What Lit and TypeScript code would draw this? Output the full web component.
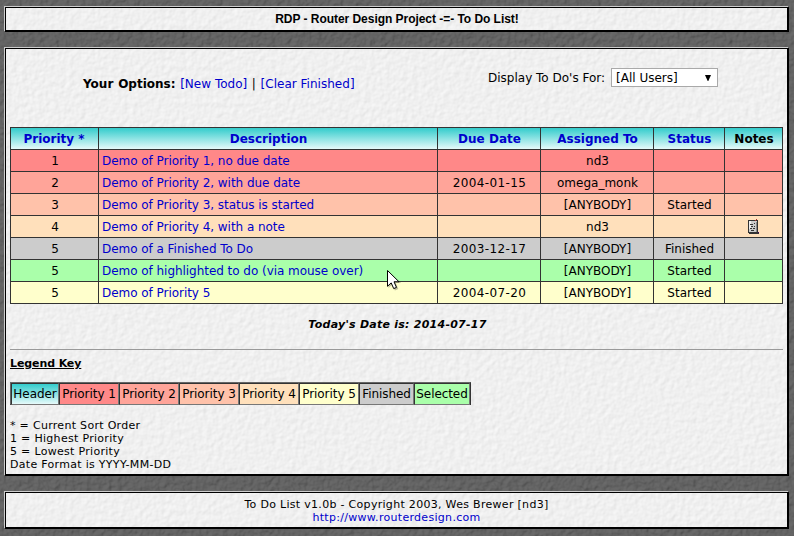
import { LitElement, html, css, unsafeCSS } from "lit";
import { customElement } from "lit/decorators.js";
import { classMap } from "lit/directives/class-map.js";

/** Embossed paper grain, lit from the upper left. */
const grain = (color: string, depth: number, seed: number) => {
  const svg = `<svg xmlns="http://www.w3.org/2000/svg" width="800" height="540"><filter id="g" x="0" y="0" width="1" height="1" color-interpolation-filters="sRGB"><feTurbulence type="fractalNoise" baseFrequency="0.19" numOctaves="2" seed="${seed}"/><feDiffuseLighting lighting-color="${color}" surfaceScale="${depth}" diffuseConstant="1"><feDistantLight azimuth="225" elevation="70"/></feDiffuseLighting></filter><rect width="800" height="540" filter="url(#g)"/></svg>`;
  return unsafeCSS(`url("data:image/svg+xml,${encodeURIComponent(svg)}")`);
};

interface Todo {
  priority: number;
  text: string;
  due?: string;
  who: string;
  status?: string;
  note?: boolean;
  tone: string;
}

const todos: Todo[] = [
  { priority: 1, text: "Demo of Priority 1, no due date", who: "nd3", tone: "p1" },
  { priority: 2, text: "Demo of Priority 2, with due date", due: "2004-01-15", who: "omega_monk", tone: "p2" },
  { priority: 3, text: "Demo of Priority 3, status is started", who: "[ANYBODY]", status: "Started", tone: "p3" },
  { priority: 4, text: "Demo of Priority 4, with a note", who: "nd3", note: true, tone: "p4" },
  { priority: 5, text: "Demo of a Finished To Do", due: "2003-12-17", who: "[ANYBODY]", status: "Finished", tone: "done" },
  { priority: 5, text: "Demo of highlighted to do (via mouse over)", who: "[ANYBODY]", status: "Started", tone: "sel" },
  { priority: 5, text: "Demo of Priority 5", due: "2004-07-20", who: "[ANYBODY]", status: "Started", tone: "p5" },
];

const legend: [string, string][] = [
  ["Header", "head"],
  ["Priority 1", "p1"],
  ["Priority 2", "p2"],
  ["Priority 3", "p3"],
  ["Priority 4", "p4"],
  ["Priority 5", "p5"],
  ["Finished", "done"],
  ["Selected", "sel"],
];

@customElement("app-root")
export class AppRoot extends LitElement {
  static styles = css`
    :host {
      display: flex;
      flex-direction: column;
      gap: 15px;
      position: relative;
      box-sizing: border-box;
      height: 536px;
      padding: 6px 5px 7px 4px;
      overflow: hidden;
      background: #666 ${grain("#6a6a6a", 1, 4)};
      font: 12px/16px "DejaVu Sans", Verdana, sans-serif;
      color: #000;
    }
    a { color: #0000cc; text-decoration: none; }
    .panel {
      box-sizing: border-box;
      border: 1px solid #000;
      border-top-color: #ccc;
      border-left-color: #ccc;
      box-shadow: inset 1px 1px 0 #000, inset -1px -1px 0 #000;
      background: #f0f0f0 ${grain("#ffffff", 0.3, 9)};
    }
    .title {
      height: 26px;
      text-align: center;
      font: bold 12px/25px "Liberation Sans", Arial, sans-serif;
      letter-spacing: -0.04px;
      padding-left: 1px;
    }
    .main { height: 429px; padding: 0 5px; }
    .bar { display: flex; height: 79px; }
    .options { padding: 28px 0 0 73px; width: 478px; box-sizing: border-box; white-space: pre; }
    .options b { letter-spacing: 0; }
    .options { letter-spacing: 0.06px; word-spacing: 0.7px; }
    .options a { letter-spacing: 0.02px; word-spacing: 0; }
    .filter { display: flex; align-items: center; height: 19px; padding-top: 20px; gap: 6px; white-space: nowrap; }
    .select {
      box-sizing: border-box;
      width: 107px;
      height: 19px;
      padding: 0 5px 0 4px;
      border: 1px solid #a9a9a9;
      background: #fff;
      display: flex;
      align-items: center;
      justify-content: space-between;
    }
    .select svg { display: block; }
    .grid {
      display: grid;
      grid-template-columns: 88px 339px 103px 113px 71px 58px;
      grid-auto-rows: 22px;
      width: 772px;
      border: solid #333;
      border-width: 1px 0 0 1px;
    }
    .cell {
      box-sizing: border-box;
      border: solid #333;
      border-width: 0 1px 1px 0;
      padding-left: 1px;
      line-height: 22px;
      text-align: center;
      white-space: nowrap;
    }
    .cell svg { display: block; margin: 3px auto 0; }
    .desc { text-align: left; padding-left: 3px; letter-spacing: -0.04px; }
    .due { letter-spacing: 0.4px; }
    .th { font-weight: bold; }
    .th:first-child { padding: 0 1px 0 0; }
    .head { background: linear-gradient(#33cccc, #e6fafa); }
    .p1 { background: #ff8888; }
    .p2 { background: #ffa499; }
    .p3 { background: #ffc2aa; }
    .p4 { background: #ffe0bb; }
    .p5 { background: #ffffcc; }
    .done { background: #cccccc; }
    .sel { background: #aaffaa; }
    .today {
      margin-top: 13px;
      padding-left: 2px;
      text-align: center;
      font: italic bold 11px/16px "DejaVu Sans", sans-serif;
      letter-spacing: 0.25px;
    }
    .rule { margin-top: 16px; height: 1px; background: #999; }
    .key {
      margin-top: 7px;
      font: bold 11px/13px "DejaVu Sans", sans-serif;
      text-decoration: underline;
      letter-spacing: -0.1px;
    }
    .legend {
      display: grid;
      grid-template-columns: 48px repeat(5, 60px) 55px 56px;
      width: 459px;
      height: 21px;
      margin-top: 12px;
      border: 1px solid #333;
      border-top-color: #666;
      border-left-color: #666;
    }
    .swatch {
      border: 1px solid #777;
      border-top-color: #333;
      border-left-color: #333;
      line-height: 20px;
      text-align: center;
      white-space: nowrap;
      letter-spacing: -0.07px;
    }
    .small { font-size: 11px; line-height: 13px; letter-spacing: 0.3px; }
    .info { margin-top: 14px; }
    .foot { height: 38px; padding-top: 6px; text-align: center; }
    .pointer { position: absolute; left: 386px; top: 269px; }
  `;

  private noteIcon() {
    return html`<svg width="12" height="16" viewBox="0 0 12 16" shape-rendering="crispEdges">
      <path fill="#333" d="M0 1h10v12h1v2H1v-1H0z" />
      <path fill="#ccc" d="M1 2h8v11H1z" />
      <path fill="#eee" d="M1 2h2v8H1z" />
      <path fill="#888" d="M8 3h1v10H8z" />
      <path fill="#333" d="M2 5h3v1H2zM6 4h1v1H6zM3 7h2v1H3zM6 7h1v1H6zM2 9h2v1H2zM5 9h2v1H5zM3 11h3v1H3z" />
      <path fill="#a33" d="M8 0h1v1H8zM7 1h1v1H7z" />
      <path fill="#405" d="M10 13h1v1h-1z" />
    </svg>`;
  }

  private row(t: Todo) {
    const cell = (extra: Record<string, boolean> = {}) => classMap({ cell: true, [t.tone]: true, ...extra });
    return html`
      <div class=${cell()}>${t.priority}</div>
      <div class=${cell({ desc: true })}><a>${t.text}</a></div>
      <div class=${cell({ due: true })}>${t.due}</div>
      <div class=${cell()}>${t.who}</div>
      <div class=${cell()}>${t.status}</div>
      <div class=${cell()}>${t.note ? this.noteIcon() : ""}</div>
    `;
  }

  render() {
    return html`
      <div class="panel title">RDP - Router Design Project -=- To Do List!</div>
      <div class="panel main">
        <div class="bar">
          <div class="options"><b>Your Options:</b> <a>[New Todo]</a> | <a>[Clear Finished]</a></div>
          <div class="filter">
            <span>Display To Do's For:</span>
            <div class="select">
              <span>[All Users]</span>
              <svg width="8" height="8" viewBox="0 0 8 8"><path d="M1 1h6L4.3 7h-.6z" /></svg>
            </div>
          </div>
        </div>
        <div class="grid">
          ${["Priority *", "Description", "Due Date", "Assigned To", "Status"].map(
            (h) => html`<div class="cell th head"><a>${h}</a></div>`
          )}
          <div class="cell th head">Notes</div>
          ${todos.map((t) => this.row(t))}
        </div>
        <div class="today">Today's Date is: 2014-07-17</div>
        <div class="rule"></div>
        <div class="key">Legend Key</div>
        <div class="legend">
          ${legend.map(([label, tone]) => html`<div class=${classMap({ swatch: true, [tone]: true })}>${label}</div>`)}
        </div>
        <div class="small info">
          * = Current Sort Order<br />1 = Highest Priority<br />5 = Lowest Priority<br />Date Format is YYYY-MM-DD
        </div>
      </div>
      <div class="panel foot small">
        To Do List v1.0b - Copyright 2003, Wes Brewer [nd3]<br /><a>http://www.routerdesign.com</a>
      </div>
      <svg class="pointer" width="18" height="24" viewBox="0 0 18 24">
        <path d="M2.5 3v16l3.8-3.6 2.6 6 3.4-1.5-2.6-5.8h5.4z" fill="#000" opacity=".25" />
        <path d="M1.5 1.5v15.8l3.7-3.4 2.5 5.7 2.8-1.2-2.5-5.6h5z" fill="#fff" stroke="#000" stroke-width="1" />
      </svg>
    `;
  }
}
